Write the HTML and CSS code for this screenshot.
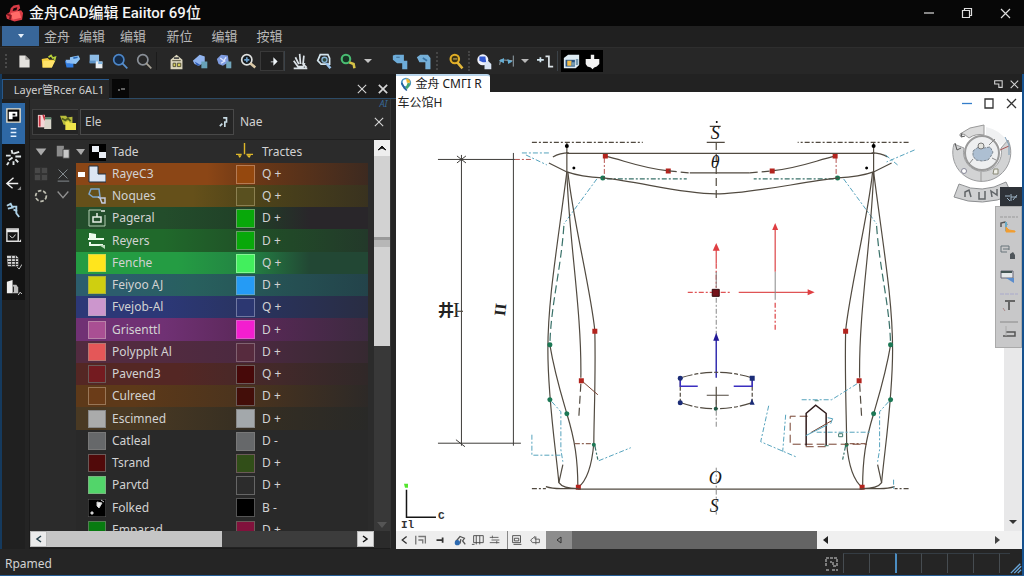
FILE: index.html
```html
<!DOCTYPE html>
<html lang="zh-CN">
<head>
<meta charset="utf-8">
<title>金舟CAD编辑</title>
<link rel="stylesheet" href="styles.css">
</head>
<body>
<div class="app">
  <header class="titlebar">
    <svg class="logo" viewBox="0 0 20 20"><path d="M1 12l4-3 1-4 3-3 6-1 1 4-3 3 4-1 2 3-1 7-8 2-8-3z" fill="#d93c46"/><path d="M9 5l4-1-1 3-4 1z" fill="#170709"/><path d="M6 10l9-2 2 7-9 2z" fill="#ff6a68"/><path d="M2 11l4 2-1 4" stroke="#7d1820" stroke-width="2" fill="none"/></svg>
    <h1 class="title">金舟CAD编辑 Eaiitor 69位</h1>
    <div class="window-buttons">
      <button aria-label="Minimize"><svg viewBox="0 0 12 12"><path d="M1 6h10"/></svg></button>
      <button aria-label="Restore"><svg viewBox="0 0 12 12"><path d="M1.500 3.500h7v7h-7zM3.500 3v-1.500h7v7h-1.500"/></svg></button>
      <button aria-label="Close"><svg viewBox="0 0 12 12"><path d="M2 2l9 9M11 2l-9 9"/></svg></button>
    </div>
  </header>

  <nav class="menubar">
    <button class="app-menu" aria-label="Application menu"><svg viewBox="0 0 8 8"><path d="M1 2h6L4 6z" fill="#e6f0fa"/></svg></button>
    <button class="first">金舟</button>
    <button>编辑</button>
    <button>编辑</button>
    <button>新位</button>
    <button>编辑</button>
    <button>按辑</button>
  </nav>

  <div class="toolbar">
    <span class="grip"></span>
    <button aria-label="New"><svg viewBox="0 0 20 20"><path d="M4 3h7l5 5v9H4z" fill="#e4e2de"/><path d="M11 3l5 5h-5z" fill="#9c9a96"/></svg></button>
    <button aria-label="Open"><svg viewBox="0 0 20 20"><path d="M2 7l7-1 2 2h6l-3 9H3z" fill="#f6cf3d"/><path d="M4 9h14l-4 8H3z" fill="#ffe36a"/><path d="M10 5l3-2 2 3 3-1-1 4" stroke="#b6cf3a" stroke-width="2" fill="none"/></svg></button>
    <button aria-label="Save"><svg viewBox="0 0 20 20"><path d="M1 9h10v8H3z" fill="#2f7be0"/><path d="M7 5l10-2 2 4-5 6-7-1z" fill="#8fc4f4"/><path d="M2 8h8v4H3z" fill="#8dbcf2"/><path d="M11 6l5-1" stroke="#2a68b8" stroke-width="2"/></svg></button>
    <button aria-label="Save all"><svg viewBox="0 0 20 20"><path d="M2 2h11v10H2z" fill="#8ebce6"/><path d="M9 10h8v8H9z" fill="#e9edf0"/><path d="M2 9h7v3H2z" fill="#5c92c6"/><path d="M12 10h5v3h-5z" fill="#7eb3e0"/></svg></button>
    <button aria-label="Find"><svg viewBox="0 0 20 20"><circle cx="8" cy="8" r="6" fill="#142b48" stroke="#4c86c8" stroke-width="2"/><path d="M12 12l6 6" stroke="#5a90cc" stroke-width="2"/></svg></button>
    <button aria-label="Preview"><svg viewBox="0 0 20 20"><circle cx="8" cy="8" r="6" fill="none" stroke="#8a9098" stroke-width="2"/><path d="M12 12l6 6" stroke="#a7a296" stroke-width="2"/></svg></button>
    <span class="sep"></span>
    <button aria-label="Home"><svg viewBox="0 0 20 20"><path d="M3 8l7-6 7 6v11H3z" fill="#dcd6bd"/><path d="M5 9h10M6 12h3v4H6zM11 12h4v4h-4z" stroke="#45412d" stroke-width="1" fill="#d5ce59"/><path d="M7 6h6" stroke="#444" stroke-width="2"/></svg></button>
    <button aria-label="Database"><svg viewBox="0 0 20 20"><path d="M1 9l8-7 6 2v7l-7 4-5-2z" fill="#91b4ef"/><path d="M3 10l7 4-4 1z" fill="#315eb6"/><path d="M11 10h7v8h-7z" fill="#67a1b8"/></svg></button>
    <button aria-label="Export"><svg viewBox="0 0 20 20"><path d="M1 7l5-5 8 1 1 8-7 4-5-2z" fill="#7f9ce0"/><path d="M5 6l4 3 3-4M6 12l5-3" stroke="#dce5ff" stroke-width="1.500" fill="none"/><path d="M12 10h6v8h-6z" fill="#72a6bd"/></svg></button>
    <button aria-label="Zoom target"><svg viewBox="0 0 20 20"><circle cx="8" cy="8" r="6" fill="#14191d" stroke="#e0e1df" stroke-width="2"/><path d="M5 8h6M8 5v6" stroke="#6d9ec9" stroke-width="2"/><path d="M12 12l6 5" stroke="#dac8a5" stroke-width="3"/></svg></button>
    <button class="boxed" aria-label="Next"><svg viewBox="0 0 20 20"><path d="M8 10h3V5l5 5-5 5v-4H8z" fill="#eef4f8"/></svg></button>
    <span class="bar"></span>
    <button aria-label="Pan"><svg viewBox="0 0 20 20"><path d="M4 5l4 8M9 1l1 12M14 3l-1 10M2 9l5 7h6l2-4M2 18h16M12 12l5 5" stroke="#dce3e8" stroke-width="2" fill="none"/></svg></button>
    <button aria-label="Zoom window"><svg viewBox="0 0 20 20"><path d="M5 2h9l2 4v7H6l-4-4z" fill="none" stroke="#d3e4ed" stroke-width="2"/><circle cx="10" cy="8" r="3" fill="#304c40" stroke="#8bb8dc" stroke-width="1.500"/><path d="M12 12l5 6" stroke="#9ac4ed" stroke-width="3"/></svg></button>
    <button aria-label="Zoom extents"><svg viewBox="0 0 20 20"><circle cx="7" cy="7" r="5" fill="#173424" stroke="#49bd72" stroke-width="2.500"/><path d="M11 11l5 2 1 5" stroke="#d6c247" stroke-width="3" fill="none"/></svg></button>
    <button class="drop" aria-label="Zoom options"><svg viewBox="0 0 8 8"><path d="M0 2h8L4 6z" fill="#c4c4c4"/></svg></button>
    <span class="space"></span>
    <button aria-label="Undo"><svg viewBox="0 0 20 20"><path d="M1 3l3-1h10v7h4v10h-6v-7H6L1 8z" fill="#6dacd9"/><path d="M5 5h4" stroke="#375f81"/></svg></button>
    <button aria-label="Redo"><svg viewBox="0 0 20 20"><path d="M1 5l4-3h9l3 4v13h-6v-8H4z" fill="#75afd8"/><path d="M8 6l5 3" stroke="#3974a5" stroke-width="2"/></svg></button>
    <span class="sep dots"></span>
    <button aria-label="Search drawing"><svg viewBox="0 0 20 20"><circle cx="8" cy="7" r="5" fill="#3d3414" stroke="#e2ae25" stroke-width="2.500"/><path d="M6 7h5" stroke="#eed173"/><path d="M11 11l6 7" stroke="#e3b83a" stroke-width="3"/></svg></button>
    <span class="bar dotted"></span>
    <button aria-label="Layers"><svg viewBox="0 0 20 20"><circle cx="8" cy="8" r="6.500" fill="#f0f3fd"/><path d="M4 9V4h7l1 7H8z" fill="#345ad1"/><path d="M10 12l4-3 4 4v6h-8z" fill="#d9e5f6"/></svg></button>
    <button class="narrow" aria-label="Dimension"><svg viewBox="0 0 20 20"><path d="M2 14l1-6 14 1M18 3v13" stroke="#a7b7c1" stroke-width="1" fill="none"/><path d="M1 9l6-3v6zM11 7l6 3-5 3z" fill="#66afd4"/></svg></button>
    <button class="drop" aria-label="Dimension options"><svg viewBox="0 0 8 8"><path d="M0 2h8L4 6z" fill="#b8b8b8"/></svg></button>
    <button aria-label="Align"><svg viewBox="0 0 20 20"><path d="M0 8h8M4 5v6" stroke="#d4e6ef" stroke-width="2"/><path d="M10 4h4v12h5" stroke="#dce4e8" stroke-width="2" fill="none"/></svg></button>
    <span class="bar"></span>
    <span class="black-group">
      <button class="narrow" aria-label="Block"><svg viewBox="0 0 20 20"><path d="M1 6l5-4h13v12l-4 4H1z" fill="#dceaf2"/><path d="M3 8h11v8H3z" fill="#285484"/><path d="M5 9h5v6H5z" fill="#f2bd4b"/><path d="M15 7h3v7h-3zM10 11h4v4h-4z" fill="#779ab0"/></svg></button>
      <button class="narrow" aria-label="Shape"><svg viewBox="0 0 20 20"><path d="M8 2h4v5h6v6l-3 3-3 1-2 2-2-2-4-1-2-3V7h6z" fill="#f2f2f2"/></svg></button>
    </span>
  </div>

  <main class="workspace">
    <section class="side">
      <div class="side-tabs">
        <button class="side-tab">Layer管Rcer 6AL1</button>
        <button class="tab-more" aria-label="More tabs"><svg viewBox="0 0 12 12"><path d="M3 7h2M6 6h4" stroke="#bbb"/></svg></button>
        <span class="fill"></span>
        <button class="x" aria-label="Unpin"><svg viewBox="0 0 12 12"><path d="M1 1l10 10M11 1L1 11"/></svg></button>
        <button class="x" aria-label="Close panel"><svg viewBox="0 0 12 12"><path d="M1 1l10 10M11 1L1 11" stroke-width="2"/></svg></button>
      </div>
      <div class="side-body">
        <div class="rail">
          <button class="active" aria-label="Layer tool">
            <svg viewBox="0 0 18 18"><path d="M2 2h14v14H2z" fill="#050505" stroke="#e9e2cf" stroke-width="1.500"/><path d="M4 13V5h9v5H8v3z" fill="#fff"/><path d="M8 7h3v2H8z" fill="#000"/></svg>
            <svg viewBox="0 0 18 18"><path d="M6 5h6M6 9h6M6 13h6" stroke="#e4f0ff" stroke-width="1.500"/></svg>
          </button>
          <button aria-label="Points"><svg viewBox="0 0 18 18"><path d="M7 1l1 4M1 7h5M9 5l6-2M11 8h6M8 9l-4 3M11 11l3 3M4 14l-2 3M9 13v4" stroke="#dfe5e7" stroke-width="2"/></svg></button>
          <button aria-label="Back"><svg viewBox="0 0 18 18"><path d="M9 3L2 9l6 5M3 9h11" stroke="#eee" stroke-width="1.500" fill="none"/><path d="M17 12v4h-4z" fill="#888"/></svg></button>
          <button aria-label="Link"><svg viewBox="0 0 18 18"><path d="M2 5l4-2 2 4-5 1M8 6h4v7l3 4M9 9l4 2" stroke="#add2e8" stroke-width="2" fill="none"/></svg></button>
          <button aria-label="Browser"><svg viewBox="0 0 18 18"><path d="M2 2h12v13H2z" fill="#151515" stroke="#dedede" stroke-width="1.500"/><path d="M2 4h12" stroke="#eee" stroke-width="3"/><path d="M5 9q3 5 6-1" stroke="#ddd" fill="none"/><path d="M17 13v3h-3z" fill="#ddd"/></svg></button>
          <button aria-label="Stack"><svg viewBox="0 0 18 18"><path d="M2 3h10l2 2v9H3z" fill="#d7d7d7"/><path d="M2 6h12M3 9h11M3 12h11M7 3v11M11 3v11" stroke="#222"/><path d="M13 15l2 2 3-5" stroke="#ccc" fill="none"/></svg></button>
          <button aria-label="Copy"><svg viewBox="0 0 18 18"><path d="M2 3l6-2v14H2z" fill="#efefef"/><path d="M8 6h4l2 3v6H8z" fill="#bcbcbc"/><path d="M9 8v6" stroke="#222"/><path d="M14 17l2-3 2 2" stroke="#ddd" fill="none"/></svg></button>
        </div>
        <div class="panel">
          <div class="panel-top"><span>AI</span></div>
          <div class="filter">
            <div class="filter-icons">
              <button aria-label="Copy layer"><svg viewBox="0 0 18 18"><path d="M1 1h8v14H1z" fill="#f4d6d6"/><path d="M3 2v12M7 1l2 6" stroke="#c93442" stroke-width="2"/><path d="M9 4h7v13H8z" fill="#d8d5ca"/><path d="M9 5h7" stroke="#4e8365" stroke-width="2"/></svg></button>
              <button aria-label="Layer folder"><svg viewBox="0 0 18 18"><path d="M0 2h7l1 2 6-1v9H4z" fill="#b8bc3b"/><path d="M6 9l4-1 1 2h7v8H6z" fill="#efe54b"/><path d="M2 5l4 2 3-2 3 3" stroke="#55601c" fill="none" stroke-width="2"/></svg></button>
            </div>
            <label class="search"><input type="text" value="Ele" aria-label="Filter"><svg viewBox="0 0 12 14"><path d="M5 2h4v5H7v6M1 12l3-3" stroke="#c8dbe4" stroke-width="2" fill="none"/></svg></label>
            <span class="filter-label">Nae</span>
            <button class="x" aria-label="Clear filter"><svg viewBox="0 0 12 12"><path d="M1 1l10 10M11 1L1 11"/></svg></button>
          </div>
          <div class="list">
            <div class="states">
              <svg viewBox="0 0 18 18"><path d="M3 5h12l-6 8z" fill="#aaa"/></svg>
              <svg viewBox="0 0 18 18"><path d="M2 2h8v12H2z" fill="#8c8c8c"/><path d="M9 6h7v10H9z" fill="#c9c9c9" stroke="#444"/></svg>
              <svg viewBox="0 0 18 18"><path d="M2 2h14v14H2z" fill="#484848"/><path d="M9 2v14M2 9h14" stroke="#333" stroke-width="2"/></svg>
              <svg viewBox="0 0 18 18"><path d="M4 4l10 10M14 4L4 14M3 17h13" stroke="#8e969b" fill="none"/></svg>
              <svg viewBox="0 0 18 18"><circle cx="9" cy="9" r="6" fill="none" stroke="#bdbdb0" stroke-width="2" stroke-dasharray="4 2"/></svg>
              <svg viewBox="0 0 18 18"><path d="M3 4l6 7 6-7" stroke="#909090" fill="none" stroke-width="1.500"/></svg>
            </div>
            <div class="table-wrap">
            <table class="layers">
              <thead><tr>
                <th class="name"><div><svg class="tri" viewBox="0 0 10 10"><path d="M0 2h9L5 8z" fill="#aaa"/></svg><svg class="ico" viewBox="0 0 18 18"><path d="M1 1h17v17H1z" fill="#000"/><path d="M4 3h7v6H4zM11 9h7v6h-7z" fill="#e8edf4"/></svg>Tade</div></th>
                <th class="color"><svg class="axis" viewBox="0 0 18 18"><path d="M9 0v12M0 12h6M11 12h7" stroke="#ddb629" stroke-width="1.500"/><path d="M2 13h4l-2 3zM11 13h5l-2 3z" fill="#e6c02c"/></svg></th>
                <th class="trade">Tractes</th>
              </tr></thead>
              <tbody>
                <tr class="r1"><td class="name"><div><svg class="tri" viewBox="0 0 10 10"><path d="M2 3h7v5H2z" fill="#fff"/></svg><svg class="ico" viewBox="0 0 18 18"><path d="M1 1h9v8h8v8H1z" fill="#dce5f2" stroke="#1c2e40"/></svg>RayeC3</div></td><td class="color"><i></i></td><td>Q +</td></tr>
                <tr class="r2"><td class="name"><div><svg class="ico" viewBox="0 0 18 18"><path d="M3 2h8l1 8H5L1 7z" fill="none" stroke="#7ea6cc" stroke-width="1.500"/><path d="M10 10l3 2M12 11h5v5h-3z" stroke="#c4cae0" stroke-width="1.500" fill="none"/></svg>Noques</div></td><td class="color"><i></i></td><td>Q +</td></tr>
                <tr class="r3"><td class="name"><div><svg class="ico" viewBox="0 0 18 18"><path d="M13 1H1v16h16V6" fill="none" stroke="#b4d0b4"/><path d="M5 8h8v5H5zM9 4v4M13 2h4" stroke="#e5eee5" stroke-width="1.500" fill="none"/></svg>Pageral</div></td><td class="color"><i></i></td><td>D +</td></tr>
                <tr class="r4"><td class="name"><div><svg class="ico" viewBox="0 0 18 18"><path d="M2 1v5M0 7h16M2 10v3h13" stroke="#ebfaeb" stroke-width="2" fill="none"/><path d="M2 1l6 1v4H2z" fill="#ebfaeb"/><path d="M11 13h6v4z" fill="#bddabd"/></svg>Reyers</div></td><td class="color"><i></i></td><td>D +</td></tr>
                <tr class="r5"><td class="name"><div><b></b>Fenche</div></td><td class="color"><i></i></td><td>Q +</td></tr>
                <tr class="r6"><td class="name"><div><b></b>Feiyoo AJ</div></td><td class="color"><i></i></td><td>D +</td></tr>
                <tr class="r7"><td class="name"><div><b></b>Fvejob-Al</div></td><td class="color"><i></i></td><td>Q +</td></tr>
                <tr class="r8"><td class="name"><div><b></b>Grisenttl</div></td><td class="color"><i></i></td><td>D +</td></tr>
                <tr class="r9"><td class="name"><div><b></b>Polypplt Al</div></td><td class="color"><i></i></td><td>D +</td></tr>
                <tr class="r10"><td class="name"><div><b></b>Pavend3</div></td><td class="color"><i></i></td><td>Q +</td></tr>
                <tr class="r11"><td class="name"><div><b></b>Culreed</div></td><td class="color"><i></i></td><td>D +</td></tr>
                <tr class="r12"><td class="name"><div><b></b>Escimned</div></td><td class="color"><i></i></td><td>D +</td></tr>
                <tr class="r13"><td class="name"><div><b></b>Catleal</div></td><td class="color"><i></i></td><td>D -</td></tr>
                <tr class="r14"><td class="name"><div><b></b>Tsrand</div></td><td class="color"><i></i></td><td>D +</td></tr>
                <tr class="r15"><td class="name"><div><b></b>Parvtd</div></td><td class="color"><i></i></td><td>D +</td></tr>
                <tr class="r16"><td class="name"><div><svg class="ico" viewBox="0 0 18 18"><path d="M0 0h18v18H0z" fill="#000" stroke="#666"/><path d="M9 3l5 1-3 5-2-2zM3 13h2v2H3zM13 1l3 2" fill="#eee" stroke="#ccc"/></svg>Folked</div></td><td class="color"><i></i></td><td>B -</td></tr>
                <tr class="r17"><td class="name"><div><b></b>Emparad</div></td><td class="color"><i></i></td><td>D +</td></tr>
              </tbody>
            </table>
            </div>
            <div class="vscroll">
              <button aria-label="Scroll up"><svg viewBox="0 0 10 10"><path d="M1 7l4-4 4 4-4-2z" fill="#111" stroke="#111"/></svg></button>
              <div class="thumb"><span></span></div>
              <div class="track"><svg viewBox="0 0 10 10"><path d="M0 2h10L5 8z" fill="#555"/></svg></div>
            </div>
          </div>
          <div class="hscroll">
            <button aria-label="Scroll left"><svg viewBox="0 0 10 10"><path d="M7 2L3 5l4 3" stroke="#27414c" stroke-width="1.500" fill="none"/></svg></button>
            <div class="hthumb"></div><div class="htrack"></div>
            <button aria-label="Scroll right"><svg viewBox="0 0 10 10"><path d="M3 2l4 3-4 3" stroke="#111" stroke-width="1.500" fill="none"/></svg></button>
          </div>
        </div>
      </div>
    </section>

    <section class="doc">
      <div class="doc-tabs">
        <button class="doc-tab"><svg viewBox="0 0 14 16"><circle cx="7" cy="6" r="5" fill="#fff" stroke="#4592c6" stroke-width="2"/><path d="M7 1a5 5 0 0 1 5 5H8z" fill="#f0b62e"/><path d="M9 6l3 1-3 6H6z" fill="#43a66d"/><path d="M2 6l3 6 3 3" stroke="#255fa0" stroke-width="2" fill="none"/></svg>金舟 CMΓI R</button>
        <span class="fill"></span>
        <button class="x" aria-label="Restore document"><svg viewBox="0 0 12 12"><path d="M2 2h9v8H7V6H2z"/></svg></button>
        <button class="x" aria-label="Close document"><svg viewBox="0 0 12 12"><path d="M2 2l9 9M11 2l-9 9"/></svg></button>
      </div>
      <div class="view">
        <svg class="drawing" viewBox="395 92 609 439" preserveAspectRatio="xMinYMin meet">
          <defs>
            <g id="half">
              <path class="ln dash" d="M531 142.500H642"/>
              <path class="ln" d="M566 142V172M552 157Q559 153 568 153"/>
              <circle cx="566" cy="146" r="2"/><circle cx="573" cy="168" r="1.500"/>
              <path class="ln" d="M604 156C625 161 640 168 668 171"/>
              <path class="ln" d="M548 163L566 172Q580 177 602 178"/>
              <path class="gr dash" d="M606 179H686"/>
              <path class="rd dash" d="M603.500 158V177"/>
              <path class="bl dash" d="M596 179L563 224"/>
              <path class="ln" d="M566 172C556 250 547 300 547 350C547 400 555 450 558 483Q562 489 577 489"/>
              <path class="gr wide-dash" d="M563 226C560 270 550 305 549 345"/>
              <path class="ln" d="M566 172C568 240 581 310 580 378"/>
              <path class="ln wide-dash" d="M580 384L578 417"/>
              <path class="ln" d="M567 172C572 220 590 290 594 331C595 380 593 420 593 443C591 468 585 482 577 488"/>
              <path class="ln" d="M549 345C554 375 562 400 566 414C574 440 577 460 577 488"/>
              <path class="bl dash" d="M551 402L560 412V450L562 462"/>
              <path class="ln" d="M562 465L558 483"/>
              <path class="bn dash" d="M574 444H593"/><path class="gr dash" d="M594 446L597 460"/>
              <g fill="#1c7855"><circle cx="549" cy="345" r="2.500"/><circle cx="549" cy="400" r="2.500"/><circle cx="566" cy="414" r="2.500"/><circle cx="602" cy="178" r="2.500"/><circle cx="593" cy="445" r="2"/></g>
              <path fill="#b3241e" d="M602 153.500h5v5h-5zM665 168.500h5v5h-5zM591.500 329h5v5h-5zM578 378.500h5v5h-5zM575 485h5v5h-5z"/>
              <path class="ln" d="M545 487Q551 489 560 489H577"/><path class="ln dash" d="M531 489H545"/>
            </g>
          </defs>
          <use href="#half"/><use href="#half" transform="translate(1439 0) scale(-1 1)"/>
          <path class="ln" d="M566 153.500H874M602 178C640 182 680 194 715 194S800 182 838 178M689 173H749M577 489.500H862"/>
          <path class="ln wide-dash" d="M668 171L689 173M749 173L771 171"/>
          <path class="bl dash" d="M521 153H550M525 155L546 165M914 150L886 162M885 155l12 10"/>
          <path class="bl dash" d="M531 435V455.500H560M598 461L630 448M893 480V491"/>
          <path class="bn" d="M582 382L597 395"/>
          <g class="dim"><path d="M437 159.500H514M437 443.500H520M460.500 155V446M512.500 153V446"/><path class="rd dash" d="M514 159.500H531"/><path d="M456 156l9 7M465 156l-9 7M455 440l9 7"/></g>
          <text class="mark" x="437" y="316">井</text><text class="mark thin-mark" x="452" y="317">I</text>
          <text class="mark" transform="translate(495 303) rotate(97)">II</text>
          <path class="ln" d="M455 311.500h7"/>
          <path class="ln wide-dash" d="M715.500 142V198"/><path class="ln" d="M709 126.500h11M706 142.500h18"/><circle cx="716" cy="122" r="1"/>
          <text class="sym" x="710" y="139">S</text><text class="sym" x="710" y="168">θ</text>
          <text class="sym" x="708" y="484">O</text><text class="sym" x="709" y="512">S</text>
          <path class="thin dash" d="M715.500 298V335M715.500 400V428M715.500 468V515"/>
          <path class="red" d="M715.500 249V264M738 292.500H808M774.500 228V272"/><path class="red dash" d="M715.500 264V288M687 292.500H731M774.500 303V330"/>
          <path class="thin" d="M774.500 272V300M715.500 272V288"/>
          <path fill="#df3e42" d="M715.500 243l3.500 8h-7zM774.500 223l3 7h-6zM814 292.500l-7-3v6z"/>
          <path fill="#76131a" stroke="#320b0d" d="M711.500 289.500h7v7h-7z"/>
          <path stroke="#342fb0" stroke-width="1.500" d="M715.500 340V378"/><path fill="#211896" d="M715.500 333l3 8h-6z"/>
          <path class="ln lens" d="M680 378Q715 367 751 378M680 403Q715 415 751 403M679.500 379V402M751.500 379V402"/>
          <path class="ln" d="M706 395.500H728M715.500 387V410"/>
          <path stroke="#3a2ec0" stroke-width="1.500" fill="none" d="M679.500 378V386.500H697M751.500 378V386.500H733"/>
          <g fill="#1b2c77"><circle cx="679.500" cy="378.500" r="2.500"/><circle cx="679.500" cy="403" r="2.500"/></g><path fill="#1b2c77" d="M749 376h5v5h-5zM751 399l3 6h-5z"/><circle cx="715" cy="409" r="2" fill="#205743"/>
          <path class="bl dash" d="M768 406L760 442L795 457M785 415L782 452M801 400H831L858 383M816 432.500H869"/>
          <path class="bn wide-dash" d="M807 416.500H789.500V444.500H866M805 447H828"/>
          <path stroke="#301c1c" stroke-width="1.500" fill="none" d="M805.500 414V446M825.500 414V446M805 414L815 405.500L826 414"/>
          <path class="bn" d="M810 433L831 421"/><path class="bl" d="M805 436L827 425M827 418l5 1-2 5"/><path stroke="#3f786b" fill="none" d="M814 401h4M838 434h4v3h-4zM824 446h4"/>
          <path stroke="#151515" stroke-width="1.500" fill="none" d="M405.500 490V517.500H435"/><path d="M403 484h4v4h-3z" fill="#54e52f"/>
          <text class="axis-text" x="437" y="519">C</text><text class="axis-text" x="400" y="528">Il</text>
        </svg>
        <div class="view-title"><span>车公馆H</span>
          <div class="view-buttons">
            <button aria-label="Minimize view"><svg viewBox="0 0 12 12"><path d="M1 6.500h10" stroke="#347dca"/></svg></button>
            <button aria-label="Maximize view"><svg viewBox="0 0 12 12"><path d="M2 2h8v9H2z"/></svg></button>
            <button aria-label="Close view"><svg viewBox="0 0 12 12"><path d="M2 2l9 9M11 2l-9 9"/></svg></button>
          </div>
        </div>
        <svg class="compass" viewBox="0 0 66 82">
          <path d="M10 12L20 6L34 3V13A19 19 0 0 0 19 16L14 12L10 14z" fill="#dcdcdc" stroke="#999"/>
          <path d="M4 22L14 26A19 19 0 1 0 51 26L58 18A29 29 0 1 1 4 22z" fill="#d2d3d4" stroke="#9b9c9e"/>
          <path d="M36 5Q50 8 57 19L50 24Q46 16 36 14z" fill="#f0f1f2"/>
          <circle cx="32" cy="31" r="17" fill="#eeeff0" stroke="#9a9a9a" stroke-width="2"/>
          <path d="M31 50V60" stroke="#999"/>
          <path d="M23 29l4-3 3-2 4 2 6-1 3 5-2 4-3 4-6 1-6-1-3-4z" fill="#adbfd2" stroke="#7d8791" stroke-dasharray="3 1"/>
          <circle cx="31" cy="24" r="3" fill="#e4e4df" stroke="#777"/><path d="M39 23l6-6M23 37l-4 5M42 36l4 2" stroke="#888"/>
          <path d="M50 28l9-4" stroke="#a55"/><path d="M55 15l4 8v10" stroke="#789ab4" fill="none"/><path d="M5 21l2 7 4-2M12 11l-1 4 4-1" stroke="#555" fill="none"/>
          <circle cx="14" cy="49" r="2.500" fill="#fff" stroke="#889"/><path d="M44 47h4v5h-5z" fill="#efefe8" stroke="#887"/>
          <path d="M9 62Q32 73 56 60L62 73Q32 86 4 75z" fill="#d0d1d2" stroke="#8d8f91"/>
          <path d="M15 75v-5l4-2 2 7M29 70v7h6v-8M42 75l-1-6 6 4v-6" stroke="#616568" stroke-width="1.500" fill="none"/>
        </svg>
        <div class="palette">
          <button class="palette-head" aria-label="Palette"><svg viewBox="0 0 18 14"><path d="M3 6h5M5 8l3 3M9 4v7M9 7h6M11 10l4-5" stroke="#9eb4c5" fill="none"/></svg></button>
          <div class="palette-body">
            <button aria-label="Rotate"><svg viewBox="0 0 22 22"><path d="M2 2h18" stroke="#999" stroke-dasharray="3 1"/><path d="M3 12V8l4-1 2 3" stroke="#555" stroke-width="1.500" fill="none"/><path d="M8 7v9" stroke="#68a9c5" stroke-width="2" fill="none"/><path d="M8 12l3 3 6 1v1H8z" fill="#f19d31" stroke="#f19d31"/></svg></button>
            <button aria-label="Copy object"><svg viewBox="0 0 22 22"><path d="M9 11H3V5h8v4M5 8h6" stroke="#68747a" fill="none"/><path d="M12 13l3-2 2 3v4h-5z" fill="#4f555a"/></svg></button>
            <button aria-label="Image"><svg viewBox="0 0 22 22"><path d="M3 4h12v7H3z" fill="#e5e8ea" stroke="#667"/><path d="M8 11h8v5z" fill="#5b8dcc"/><path d="M3 5h11" stroke="#455" stroke-width="2"/></svg></button>
            <button aria-label="Text"><svg viewBox="0 0 22 22"><path d="M2 1h18" stroke="#aac" stroke-dasharray="4 1"/><path d="M7 8h10M11 8v9" stroke="#666" stroke-width="2"/><path d="M5 15l2 3" stroke="#a88"/></svg></button>
            <button aria-label="Measure"><svg viewBox="0 0 22 22"><path d="M2 3h18" stroke="#888"/><path d="M5 17h12v-4H8" stroke="#555" stroke-width="1.500" fill="none"/><path d="M8 7v10" stroke="#aaa"/></svg></button>
          </div>
        </div>
        <div class="view-scroll"><button aria-label="Scroll down"><svg viewBox="0 0 10 10"><path d="M1 3h8L5 7z" fill="#333"/></svg></button></div>
      </div>
      <div class="doc-bottom">
        <div class="layout-tools">
          <button aria-label="First layout"><svg viewBox="0 0 16 16"><path d="M11 4L6 8l5 4" stroke="#333" stroke-width="1.500" fill="none"/></svg></button>
          <button aria-label="Layout frame"><svg viewBox="0 0 16 16"><path d="M2 3v10M5 4h8v8M5 8h5v4" stroke="#777" fill="none" stroke-width="1.500"/></svg></button>
          <button class="wide" aria-label="Add layout"><svg viewBox="0 0 16 16"><path d="M4 8h8M11 5v6" stroke="#333" stroke-width="2"/></svg></button>
          <button class="wide" aria-label="Snap"><svg viewBox="0 0 16 16"><path d="M3 10l5-6 5 2-2 3 3 4M9 7l-1 5" stroke="#555" stroke-width="1.500" fill="none"/><circle cx="5" cy="11" r="3" fill="#2c69b0"/></svg></button>
          <button aria-label="Grid"><svg viewBox="0 0 16 16"><path d="M3 3h11v8H3zM6 3v10M10 3v10M1 13h3" stroke="#444" fill="none"/></svg></button>
          <button aria-label="Order"><svg viewBox="0 0 16 16"><path d="M2 5h10M4 8h9M2 11h11M5 3v3M10 9v3" stroke="#555"/></svg></button>
          <button class="split wide" aria-label="Pages"><svg viewBox="0 0 16 16"><path d="M3 3h9v8H3zM5 6h5v3H5zM4 13h9" stroke="#444" fill="none"/></svg></button>
          <button aria-label="Flip"><svg viewBox="0 0 16 16"><path d="M3 8l5-4v3h5v4H5zM9 4v9" stroke="#555" fill="none"/></svg></button>
        </div>
        <button class="gray-arrow" aria-label="Previous layout"><svg viewBox="0 0 10 10"><path d="M7 2L3 5l4 3z" fill="none" stroke="#333"/></svg></button>
        <div class="gray-thumb"></div>
        <div class="light-track"><button aria-label="Pan left"><svg viewBox="0 0 10 10"><path d="M7 1v8L2 5z" fill="#222"/></svg></button><button class="pan-right" aria-label="Pan right"><svg viewBox="0 0 10 10"><path d="M3 1v8l5-4z" fill="#444"/></svg></button></div>
      </div>
    </section>
  </main>

  <footer class="status">
    <span class="fill">Rpamed</span>
    <svg class="status-icon" viewBox="0 0 16 16"><path d="M2 10V2h11v8H9V6H6M2 14h4M8 14h6" stroke="#999" fill="none" stroke-width="1.500" stroke-dasharray="3 1"/></svg>
    <div class="cells"><span></span><span></span><span class="on"></span><span></span><span></span><span></span><span></span></div>
    <svg class="resize" viewBox="0 0 14 14"><path d="M1 13L12 2M5 13l8-8M9 13l4-4" stroke="#6aa9df" stroke-width="1.500"/></svg>
  </footer>
</div>
</body>
</html>
```

FILE: styles.css
```css
* { box-sizing: border-box; }
body { margin: 0; background: #242424; color: #d2d2d2; font: 12px/16px "Noto Sans", "Noto Sans CJK SC", sans-serif; }
button { display: flex; align-items: center; justify-content: center; margin: 0; padding: 0; border: 0; background: none; color: inherit; font: inherit; flex: none; }
svg { display: block; flex: none; }
.fill { flex: 1; }
.app { display: flex; flex-direction: column; height: 100vh; overflow: hidden; border-bottom: 1px solid #245c94; }

.titlebar { display: flex; align-items: center; flex: none; height: 26px; padding-left: 5px; background: #070707; }
.logo { width: 19px; height: 20px; }
.title { flex: 1; margin: 0 0 0 5px; color: #f4f4f4; font: 500 15px/24px Roboto, "Noto Sans CJK SC", sans-serif; }
.window-buttons { display: flex; }
.window-buttons button { width: 38px; height: 24px; }
.window-buttons svg { width: 12px; height: 12px; fill: none; stroke: #ddd; stroke-width: 1.2; }

.menubar { display: flex; flex: none; height: 21px; padding-left: 2px; background: #202020; }
.menubar button { width: 45px; height: 20px; color: #b8b8b8; font-size: 13px; }
.menubar .app-menu { width: 37px; background: #386699; }
.menubar .app-menu svg { width: 8px; height: 8px; }
.menubar .first { width: 36px; }
.menubar .first + button { width: 34px; }
.menubar .first + button + button { width: 48px; }

.toolbar { display: flex; align-items: center; flex: none; height: 27px; background: #272727; border-top: 1px solid #2e2e2e; }
.grip { width: 4px; height: 14px; margin: 0 3px 0 5px; border-left: 2px dotted #4a4a4a; }
.toolbar button { width: 24px; height: 22px; }
.toolbar svg { width: 17px; height: 17px; }
.toolbar .drop { width: 16px; }
.toolbar .drop svg { width: 8px; height: 8px; }
.toolbar .narrow { width: 21px; }
.toolbar .boxed { height: 20px; border: 1px solid #393939; background: #202020; }
.sep { width: 8px; height: 18px; border-left: 1px solid #1b1b1b; }
.bar { width: 4px; height: 20px; border-left: 1px solid #3b4248; }
.dots, .dotted { border-left: 2px dotted #454545; }
.space { width: 12px; }
.black-group { display: flex; background: #000; }

.workspace { display: flex; flex: 1; min-height: 0; background: #1e1e1e; border-right: 2px solid #15518e; }
.side { display: flex; flex-direction: column; width: 38.7%; min-width: 0; border-left: 2px solid #153a5e; }
.side-tabs { display: flex; align-items: center; flex: none; height: 25px; padding-top: 5px; background: #1b1b1b; border-bottom: 1px solid #2d4b66; }
.side-tab { align-self: stretch; width: 107px; margin-bottom: -1px; padding-left: 6px; background: #272727; border-top: 1px solid #28588a; border-left: 1px solid #28588a; color: #d0d0d0; font-size: 11px; white-space: nowrap; }
.tab-more { width: 17px; height: 19px; margin-left: 3px; background: #070707; }
.tab-more svg { width: 12px; height: 12px; }
.x { width: 21px; height: 16px; }
.x svg { width: 10px; height: 10px; fill: none; stroke: #d5d5d5; stroke-width: 1.3; }
.side-tabs .x:last-child { margin-right: 2px; }
.side-body { display: flex; flex: 1; min-height: 0; background: #242424; }
.rail { display: flex; flex-direction: column; flex: none; width: 23px; padding-top: 4px; background: #202020; }
.rail button { height: 26px; background: #131313; }
.rail .active { flex-direction: column; height: 41px; background: #2e68a5; }
.rail svg { width: 17px; height: 17px; }
.panel { display: flex; flex-direction: column; flex: 1; min-width: 0; margin: 0 5px 0 4px; background: #2b2b2b; border: 1px solid #1c1c1c; border-top: 0; border-right-color: #343434; }
.panel-top { flex: none; height: 9px; padding-right: 2px; color: #386895; font: italic 9px/9px "Noto Sans", sans-serif; text-align: right; }
.filter { display: flex; align-items: center; flex: none; height: 32px; padding: 0 0 4px 2px; border-bottom: 1px solid #202020; }
.filter-icons { display: flex; width: 46px; height: 26px; border: 1px solid #414141; border-right: 0; background: #242424; }
.filter-icons button { width: 23px; }
.filter-icons svg { width: 16px; height: 16px; }
.search { display: flex; align-items: center; width: 154px; height: 26px; margin-left: 2px; padding: 0 4px; background: #252525; border: 1px solid #494949; }
.search input { flex: 1; min-width: 0; padding: 0; border: 0; background: none; color: #ccc; font: inherit; outline: 0; }
.search svg { width: 10px; height: 14px; }
.filter-label { flex: 1; padding-left: 6px; }
.list { display: flex; flex: 1; min-height: 0; }
.states { display: grid; grid-template-columns: 22px 22px; grid-template-rows: 23px 22px 22px; align-content: start; align-items: center; justify-items: center; width: 46px; flex: none; }
.states svg { width: 16px; height: 16px; }
.table-wrap { flex: 1; min-width: 0; overflow: hidden; }
.layers { width: calc(100% - 6px); border-spacing: 0; table-layout: fixed; }
.layers th, .layers td { height: 22px; padding: 0; text-align: left; font-weight: 400; line-height: 20px; white-space: nowrap; }
.layers tr:nth-child(4n) td, .layers th { height: 23px; }
.layers .name { width: 160px; }
.layers .color { width: 26px; }
.layers .name div { display: flex; align-items: center; justify-content: flex-start; padding-left: 12px; }
.layers .tri { width: 10px; height: 10px; margin-left: -12px; margin-right: 2px; }
.layers .ico { width: 18px; height: 18px; margin-right: 6px; }
.layers .axis { width: 17px; height: 17px; }
.layers b, .layers i { display: block; width: 19px; height: 19px; border: 1px solid #6a5a58; }
.layers b { width: 18px; height: 18px; margin-right: 6px; }
.layers tr { background: #292929; }
.layers thead tr { background: #2b2b2b; }
.layers .r1 { background: linear-gradient(90deg, #8b4616 45%, #6a3716 62%, #3d2a20); }
.layers .r2 { background: linear-gradient(90deg, #65501a 40%, #4d4319 62%, #39321f); }
.layers .r3 { background: linear-gradient(90deg, #234d2b 30%, #203f27 60%, #29262a 80%); }
.layers .r4 { background: linear-gradient(90deg, #20692b 30%, #205027 60%, #23392a); }
.layers .r5 { background: linear-gradient(90deg, #249c43 35%, #238143 60%, #224734 80%); }
.layers .r6 { background: linear-gradient(90deg, #2c5d6d 15%, #28605e 40%, #23434a); }
.layers .r7 { background: linear-gradient(90deg, #2c3877 30%, #29335e 62%, #292d43); }
.layers .r8 { background: linear-gradient(90deg, #703174 30%, #5a2858 60%, #3c2a3f); }
.layers .r9 { background: linear-gradient(90deg, #522b40 30%, #4b2940 60%, #362931); }
.layers .r10 { background: linear-gradient(90deg, #542724 35%, #42292a 70%, #302828); }
.layers .r11 { background: linear-gradient(90deg, #5d3919 20%, #49331e 60%, #2d2927); }
.layers .r12 { background: linear-gradient(90deg, #493923 20%, #352e22 60%, #292927); }
.r1 i { background: #95480e; border-color: #b57b53; }
.r2 i { background: #59501f; border-color: #8b8051; }
.r3 i, .r4 i { background: #08a80a; border-color: #69a068; }
.r5 b { background: #ffe51d; border-color: #d6d849; }
.r5 i { background: #42ef5d; border-color: #85f594; }
.r6 b { background: #cfcf10; border-color: #afb33a; }
.r6 i { background: #259bf5; border-color: #5fa4cd; }
.r7 b { background: #cc96cd; border-color: #bca1bf; }
.r7 i { background: #2c3771; border-color: #7078a1; }
.r8 b { background: #a94f93; border-color: #b882a8; }
.r8 i { background: #f31ecf; border-color: #dd60ca; }
.r9 b { background: #e45758; border-color: #b77772; }
.r9 i { background: #572b3e; border-color: #806170; }
.r10 b { background: #741b20; }
.r10 i { background: #470909; }
.r11 b { background: #6b3c18; border-color: #987657; }
.r11 i { background: #430e09; }
.r12 b { background: #aaabab; border-color: #888; }
.r12 i { background: #a3a8ab; border-color: #888; }
.r13 b, .r13 i { background: #66686a; border-color: #787878; }
.r14 b { background: #510a0a; }
.r14 i { background: #314e18; }
.r15 b { background: #52d56a; border-color: #79b47f; }
.r15 i { background: #2c2c2c; border-color: #666; }
.r16 i { background: #000; border-color: #555; }
.r17 b { background: #087b10; border-color: #547c54; }
.r17 i { background: #81123c; }
.vscroll { display: flex; flex-direction: column; flex: none; width: 16px; background: #383838; }
.vscroll button { height: 16px; background: #eee; }
.vscroll button svg { width: 10px; height: 10px; }
.thumb { display: flex; flex-direction: column; flex: 191 1 0; background: #d2d2d2; }
.thumb span { height: 10px; margin-top: 81px; background: #b7b7b7; border-top: 3px solid #999; }
.track { display: flex; align-items: flex-end; justify-content: center; flex: 185 1 0; }
.track svg { width: 10px; height: 12px; }
.hscroll { display: flex; flex: none; height: 17px; margin-right: 16px; background: #3c3c3c; border-bottom: 1px solid #222; }
.hscroll button { width: 17px; background: #ebebeb; border: 1px solid #bbb; }
.hscroll svg { width: 10px; height: 10px; }
.hthumb { flex: 174; background: #c5c5c5; }
.htrack { flex: 134; }

.doc { display: flex; flex-direction: column; flex: 1; min-width: 0; color: #222; }
.doc-tabs { display: flex; flex: none; align-items: flex-end; height: 18px; background: #222; color: #ddd; }
.doc-tab { width: 94px; height: 18px; gap: 3px; padding-right: 3px; background: #fff; color: #191919; border-top: 2px solid #b8d4ea; border-radius: 0 3px 0 0; white-space: nowrap; }
.doc-tab svg { width: 12px; height: 15px; }
.doc-tabs .x { width: 16px; }
.view { position: relative; display: flex; flex: 1; min-height: 0; background: #fff; }
.drawing { flex: 1; min-width: 0; width: 100%; height: 100%; }
.view-title { position: absolute; top: 3px; left: 2px; right: 0; display: flex; justify-content: space-between; font-size: 12px; }
.view-buttons { display: flex; }
.view-buttons button { width: 22px; height: 16px; }
.view-buttons svg { width: 12px; height: 12px; fill: none; stroke: #333; stroke-width: 1.3; }
.compass { position: absolute; top: 30px; right: 6px; width: 66px; height: 82px; }
.palette { position: absolute; top: 95px; right: 0; display: flex; flex-direction: column; align-items: flex-end; }
.palette-head { width: 22px; height: 19px; background: #2e3238; }
.palette-head svg { width: 18px; height: 14px; }
.palette-body { display: flex; flex-direction: column; width: 27px; height: 142px; padding: 6px 0 4px; background: #c8c8c9; border: 1px solid #aaa; }
.palette-body button { flex: 1; }
.palette-body svg { width: 22px; height: 22px; }
.view-scroll { display: flex; align-items: flex-end; justify-content: center; align-self: flex-end; flex: none; width: 18px; height: 42%; padding-bottom: 4px; background: #e8e8e9; }
.view-scroll svg { width: 10px; height: 10px; }
.doc-bottom { display: flex; flex: none; height: 18px; background: #eee; }
.layout-tools { display: flex; width: 150px; }
.layout-tools button { width: 17px; }
.layout-tools .wide { width: 20px; }
.layout-tools .split { margin-left: 3px; border-left: 1px solid #888; }
.layout-tools svg { width: 14px; height: 14px; }
.gray-arrow { width: 26px; background: #8d8d8d; }
.gray-arrow svg, .light-track svg { width: 10px; height: 10px; }
.gray-thumb { flex: 246 1 0; background: #646464; }
.light-track { display: flex; justify-content: space-between; flex: 206 1 0; background: #f0f0f0; }
.light-track button { width: 18px; }
.light-track .pan-right { margin-right: 16px; }

.status { display: flex; align-items: center; flex: none; height: 26px; padding: 4px 0 0 5px; background: #252525; border-right: 2px solid #15518e; }
.status-icon { width: 16px; height: 16px; margin-right: 3px; }
.cells { display: flex; align-self: stretch; padding-bottom: 2px; }
.cells span { width: 26px; border-left: 1px solid #464c51; border-top: 1px solid #343c43; }
.cells .on { border-left: 2px solid #4b8dc2; }
.cells span:last-child { width: 11px; }
.resize { align-self: flex-end; width: 12px; height: 14px; }

.drawing path { fill: none; }
.drawing path[fill] { fill: revert-layer; }
.ln { stroke: #514a40; stroke-width: 1.2; }
.gr { stroke: #397169; stroke-width: 1.2; }
.rd { stroke: #b65450; }
.bn { stroke: #74402f; }
.bl { stroke: #55a3bd; }
.red { stroke: #df5355; stroke-width: 1.3; }
.thin { stroke: #888; }
.dash { stroke-dasharray: 5 2 2 2; }
.wide-dash { stroke-dasharray: 8 4; }
.lens { stroke-dasharray: 12 2 4 2; }
.dim path { stroke: #3e3c39; }
.dim .rd { stroke: #b65450; }
.sym { font: italic 18px "Liberation Serif", serif; fill: #171717; }
.mark { font: bold 16px "Liberation Serif", "Noto Sans CJK SC", serif; fill: #222; }
.thin-mark { font-weight: 400; font-size: 20px; }
.axis-text { font: bold 11px "Liberation Mono", monospace; fill: #333; }
```
